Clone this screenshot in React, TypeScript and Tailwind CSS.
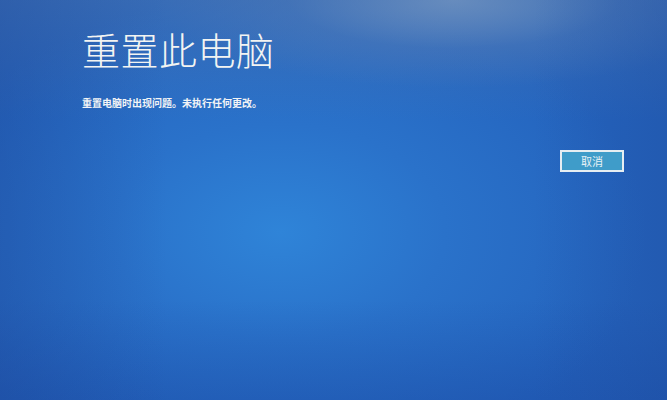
import React from 'react';

// Windows recovery screen: "Reset this PC" failure notice
const App: React.FC = () => {
    return (
        <div
            className="relative w-[667px] h-[400px] overflow-hidden bg-[#2463bd] font-['Noto_Sans_CJK_SC','Noto_Sans',sans-serif] text-white"
        >
            {/* photo lighting: bright centre, glare at top, darker corners */}
            <div className="absolute inset-0 bg-[radial-gradient(ellipse_55%_60%_at_42%_58%,#2f84d8_0%,#2a72ca_45%,rgba(36,90,175,0)_100%)]" />
            <div className="absolute inset-0 bg-[radial-gradient(ellipse_45%_22%_at_68%_0%,rgba(150,175,205,0.75)_0%,rgba(90,130,190,0.35)_55%,rgba(60,110,180,0)_100%)]" />
            <div className="absolute inset-0 bg-[linear-gradient(180deg,rgba(80,120,175,0.45)_0%,rgba(40,100,190,0)_30%,rgba(30,80,170,0)_75%,rgba(25,70,160,0.35)_100%)]" />
            <div className="absolute inset-0 bg-[linear-gradient(90deg,rgba(30,70,150,0.35)_0%,rgba(30,80,170,0)_25%,rgba(30,80,170,0)_80%,rgba(30,70,150,0.3)_100%)]" />

            <div className="relative flex flex-col pl-[82px] pr-[43px] pt-[22px]">
                <h1 className="text-[38px] leading-[54px] font-light tracking-[0.5px] text-[#f3f4f2]">
                    重置此电脑
                </h1>
                <p className="mt-[20px] text-[10px] leading-[14px] font-bold text-[#f2f4f6]">
                    重置电脑时出现问题。未执行任何更改。
                </p>
                <div className="mt-[40px] flex justify-end">
                    <button className="w-[64px] h-[22px] border-2 border-[#e6eef2] bg-[#3f9cc9] text-[11px] leading-[16px] text-[#e8f2f6]">
                        取消
                    </button>
                </div>
            </div>
        </div>
    );
};

export default App;
